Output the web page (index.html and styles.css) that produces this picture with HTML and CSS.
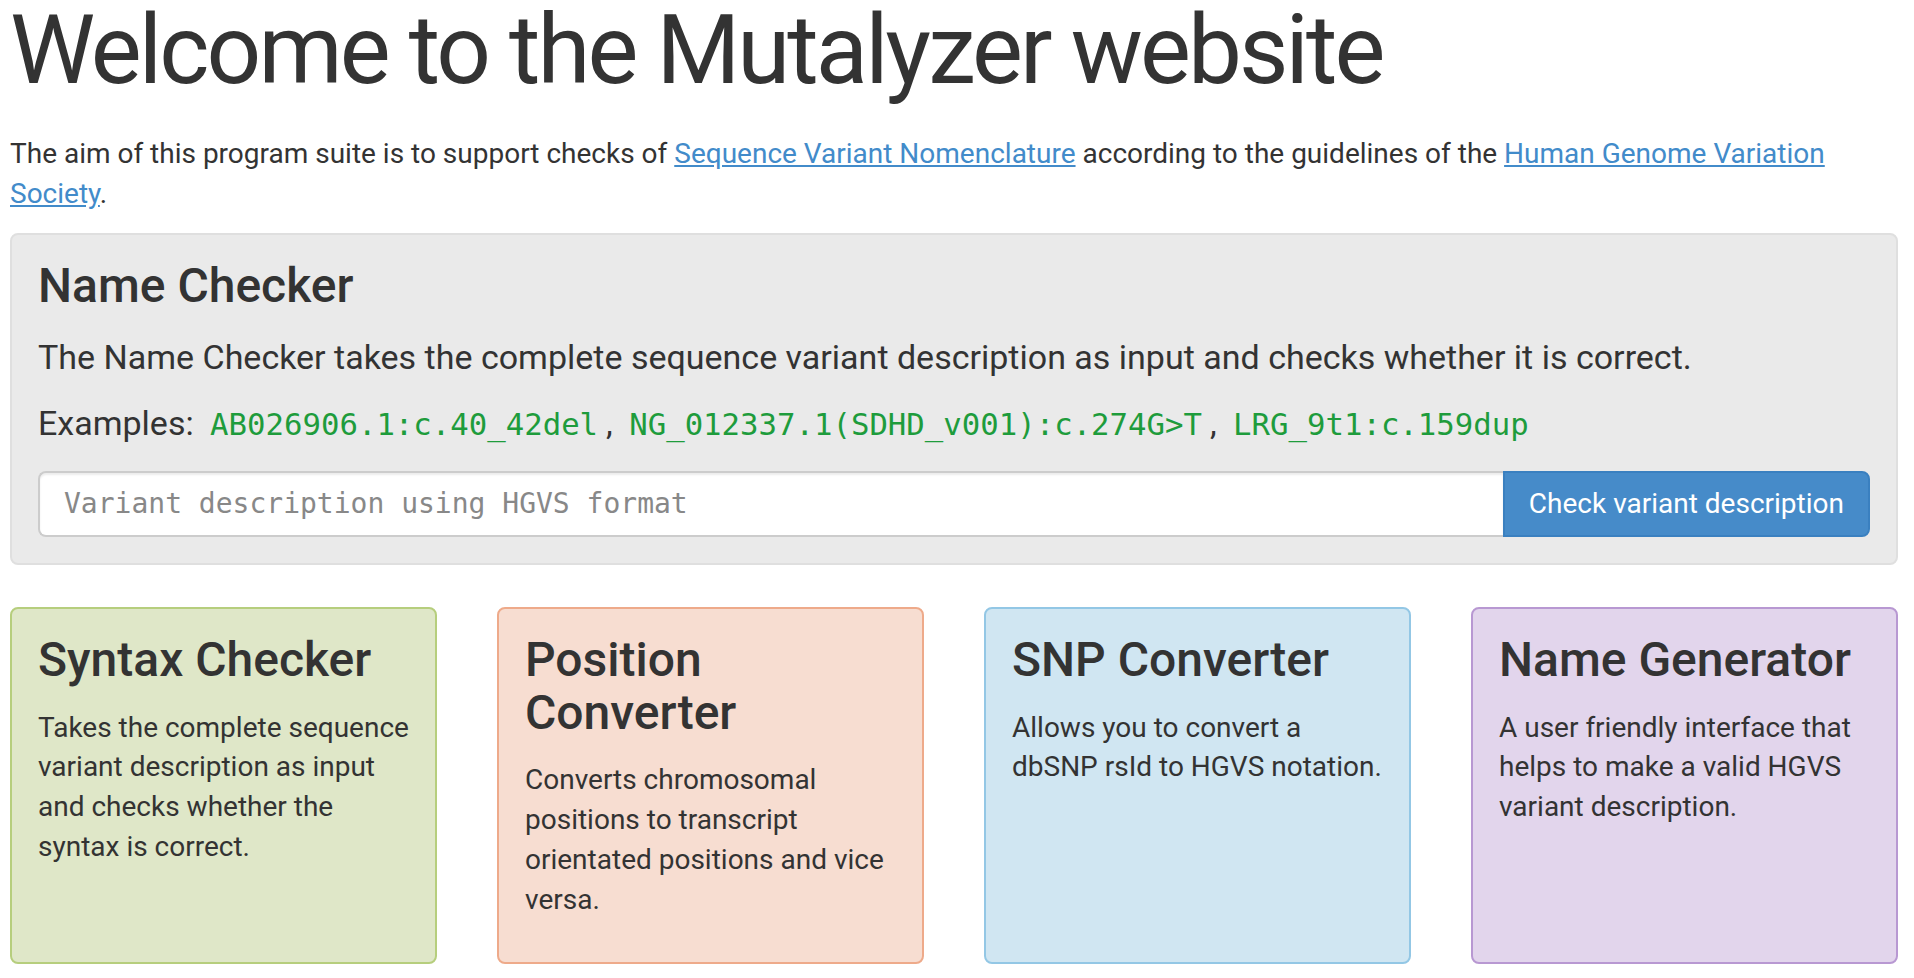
FILE: index.html
```html
<!DOCTYPE html>
<html lang="en">
<head>
<meta charset="utf-8">
<title>Mutalyzer</title>
<link rel="stylesheet" href="styles.css">
</head>
<body>
<div class="page">
  <h1 class="title">Welcome to the Mutalyzer website</h1>
  <p class="intro">The aim of this program suite is to support checks of <a href="#">Sequence Variant Nomenclature</a> according to the guidelines of the <a href="#">Human Genome Variation Society</a>.</p>

  <div class="well">
    <h3 class="heading">Name Checker</h3>
    <p class="lead lead-first">The Name Checker takes the complete sequence variant description as input and checks whether it is correct.</p>
    <p class="lead lead-examples">Examples: <code class="example">AB026906.1:c.40_42del</code>, <code class="example">NG_012337.1(SDHD_v001):c.274G&gt;T</code>, <code class="example">LRG_9t1:c.159dup</code></p>
    <form class="input-group">
      <input class="form-control" type="text" placeholder="Variant description using HGVS format">
      <button class="btn" type="button">Check variant description</button>
    </form>
  </div>

  <div class="cards">
    <div class="card card-green">
      <h3 class="heading">Syntax Checker</h3>
      <p class="card-text">Takes the complete sequence variant description as input and checks whether the syntax is correct.</p>
    </div>
    <div class="card card-orange">
      <h3 class="heading">Position Converter</h3>
      <p class="card-text">Converts chromosomal positions to transcript orientated positions and vice versa.</p>
    </div>
    <div class="card card-blue">
      <h3 class="heading">SNP Converter</h3>
      <p class="card-text">Allows you to convert a dbSNP rsId to HGVS notation.</p>
    </div>
    <div class="card card-purple">
      <h3 class="heading">Name Generator</h3>
      <p class="card-text">A user friendly interface that helps to make a valid HGVS variant description.</p>
    </div>
  </div>
</div>
</body>
</html>
```
FILE: styles.css
```css
* { box-sizing: border-box; }
html, body { margin: 0; padding: 0; background: #fff; }
body {
  font-family: Roboto, "Liberation Sans", sans-serif;
  color: #333;
  font-size: 28px;
  line-height: 1.42857;
}
.page {
  width: 1898px;
  padding-left: 10px;
}
.title {
  font-size: 96px;
  font-weight: 400;
  letter-spacing: -2.9px;
  line-height: 1.06;
  margin: 0;
}
.intro {
  margin: 32px 0 19px 0;
}
.intro a { color: #428bca; text-decoration: underline; }
.well {
  background: #eaeaea;
  border: 2px solid #dfdfdf;
  border-radius: 8px;
  padding: 25px 26px 26px 26px;
}
.heading {
  font-size: 48px;
  font-weight: 500;
  line-height: 1.1;
  margin: 0;
}
.lead {
  font-size: 34px;
  line-height: 1.4;
  margin: 0;
}
.lead-first { margin-top: 21px; }
.lead-examples { margin-top: 19px; }
.example {
  font-family: "DejaVu Sans Mono", monospace;
  font-size: 30.7px;
  color: #1e9c3c;
  padding: 0 8px;
}
.input-group {
  display: flex;
  margin: 23px 0 0 0;
}
.form-control {
  flex: 1;
  min-width: 0;
  height: 66px;
  border: 2px solid #ccc;
  border-right: 0;
  border-radius: 8px 0 0 8px;
  padding: 0 24px;
  font-family: "DejaVu Sans Mono", monospace;
  font-size: 28px;
  color: #555;
  background: #fff;
  box-shadow: inset 0 2px 2px rgba(0,0,0,0.075);
}
.form-control::placeholder { color: #888; }
.btn {
  flex: 0 0 auto;
  white-space: nowrap;
  height: 66px;
  border: 2px solid #3a80c0;
  background: #468bc9;
  color: #fff;
  font-family: Roboto, "Liberation Sans", sans-serif;
  font-size: 28px;
  border-radius: 0 8px 8px 0;
  padding: 0 24px;
}
.cards {
  display: grid;
  grid-template-columns: repeat(4, 1fr);
  gap: 60px;
  margin-top: 42px;
}
.card {
  height: 357px;
  border: 2px solid;
  border-radius: 8px;
  padding: 25px 26px;
}
.card .heading { margin-bottom: 21px; }
.card-text { margin: 0; }
.card-green { background: #dfe7c8; border-color: #b6ce7d; }
.card-orange { background: #f7ddd1; border-color: #eeaa8a; }
.card-blue { background: #d0e6f2; border-color: #93c7e5; }
.card-purple { background: #e2d5ec; border-color: #b898d2; }
```
